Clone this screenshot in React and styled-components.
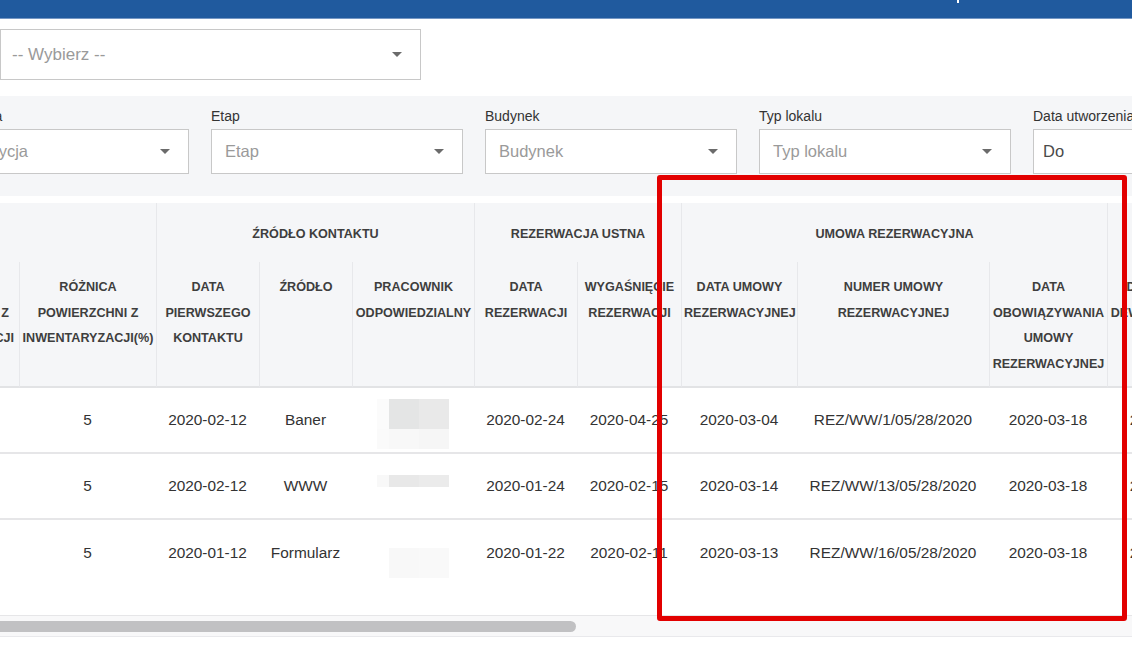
import React from "react";
import styled, { createGlobalStyle } from "styled-components";

const GlobalStyle = createGlobalStyle`
  *, *::before, *::after {
    box-sizing: border-box;
  }
  html,
  body {
    margin: 0;
    padding: 0;
    background: #fff;
  }
  body {
    font-family: "Liberation Sans", Arial, sans-serif;
    color: #333;
    overflow: hidden;
  }
`;

const Page = styled.div`
  position: relative;
  width: 1132px;
  height: 667px;
  overflow: hidden;
`;

const TopBar = styled.header`
  display: flex;
  height: 19px;
  background: #205a9e;
  border-bottom: 1px solid #7597c4;
`;

const BarTick = styled.span`
  margin-left: 957px;
  width: 2px;
  height: 3px;
  background: #fff;
`;

const SelectRow = styled.div`
  padding-top: 10px;
`;

const Select = styled.div`
  display: flex;
  align-items: center;
  justify-content: space-between;
  width: ${(props) => props.$width || "100%"};
  height: ${(props) => props.$height || 45}px;
  padding: 0 ${(props) => props.$pr || 18}px 0 ${(props) => props.$pl || 13}px;
  background: #fff;
  border: 1px solid #c8c8c8;
  font-size: ${(props) => props.$size || 16.5}px;
  color: ${(props) => (props.$dark ? "#4a4a4a" : "#9a9a9a")};
  white-space: nowrap;
`;

const Caret = styled.span`
  flex: none;
  width: 0;
  height: 0;
  border-left: 5px solid transparent;
  border-right: 5px solid transparent;
  border-top: 5px solid #6b6b6b;
`;

const FilterPanel = styled.section`
  margin-top: 16px;
  height: 100px;
  background: #f5f6f8;
  padding: 12px 0 0;
`;

const FilterGrid = styled.div`
  display: grid;
  grid-template-columns: repeat(5, 252px);
  column-gap: 22px;
  margin-left: -63px;
`;

const Field = styled.div`
  display: flex;
  flex-direction: column;
  gap: 4px;
`;

const Label = styled.label`
  font-size: 14px;
  line-height: 17px;
  color: #333;
  white-space: nowrap;
`;

const TableArea = styled.div`
  margin-top: 7px;
  padding-bottom: 30px;
`;

const Table = styled.table`
  table-layout: fixed;
  border-collapse: separate;
  border-spacing: 0;
  margin-left: -103px;
  width: 1454px;
`;

const GroupCell = styled.th`
  height: 59px;
  padding: 3px 2px 0;
  background: #f5f6f8;
  border-left: 1px solid #e7e8eb;
  font-size: 12.6px;
  font-weight: 700;
  color: #3e3e3e;
  text-align: center;
  vertical-align: middle;
  white-space: nowrap;
`;

const HeadCell = styled.th`
  height: 126px;
  padding: 13px 2px 0;
  background: #f5f6f8;
  border-left: 1px solid #e7e8eb;
  border-bottom: 2px solid #e2e3e5;
  font-size: 12.6px;
  line-height: 25.5px;
  font-weight: 700;
  color: #3e3e3e;
  text-align: center;
  vertical-align: top;
  white-space: nowrap;
`;

const Row = styled.tr`
  &:last-child td {
    border-bottom: none;
    height: 65px;
  }
`;

const Cell = styled.td`
  height: 66px;
  padding: 0 2px;
  border-bottom: 2px solid #e6e6e8;
  font-size: 15.4px;
  color: #333;
  text-align: center;
  vertical-align: middle;
  white-space: nowrap;
`;

const Blur = styled.div`
  display: grid;
  grid-template-columns: 12px 30px 30px;
  grid-template-rows: ${(props) => props.$rows};
  width: 72px;
  margin: 0 auto;
  transform: translateY(${(props) => props.$dy}px);
`;

const BlurPixel = styled.span`
  background: ${(props) => props.$c};
`;

const ScrollTrack = styled.div`
  display: flex;
  align-items: center;
  height: 22px;
  background: #f8f8f9;
  border-top: 1px solid #e6e6e8;
  border-bottom: 1px solid #e9e9ec;
`;

const ScrollThumb = styled.div`
  margin-left: -10px;
  width: 586px;
  height: 11px;
  border-radius: 6px;
  background: #c1c1c3;
`;

const Highlight = styled.div`
  position: absolute;
  left: 657px;
  top: 175px;
  width: 470px;
  height: 446px;
  border: 5px solid #e20000;
  border-radius: 3px;
  pointer-events: none;
`;

const filters = [
  { label: "Inwestycja", value: "Inwestycja", caret: true },
  { label: "Etap", value: "Etap", caret: true },
  { label: "Budynek", value: "Budynek", caret: true },
  { label: "Typ lokalu", value: "Typ lokalu", caret: true },
  { label: "Data utworzenia", value: "Do", dark: true },
];

const colWidths = [122, 137, 103, 93, 122, 103, 104, 116, 192, 118, 124, 120];

const groups = [
  { title: "", span: 2 },
  { title: "ŹRÓDŁO KONTAKTU", span: 3 },
  { title: "REZERWACJA USTNA", span: 2 },
  { title: "UMOWA REZERWACYJNA", span: 3 },
  { title: "UMOWA DEWELOPERSKA", span: 2 },
];

const columns = [
  ["RÓŻNICA", "POWIERZCHNI Z", "INWENTARYZACJI"],
  ["RÓŻNICA", "POWIERZCHNI Z", "INWENTARYZACJI(%)"],
  ["DATA", "PIERWSZEGO", "KONTAKTU"],
  ["ŹRÓDŁO"],
  ["PRACOWNIK", "ODPOWIEDZIALNY"],
  ["DATA", "REZERWACJI"],
  ["WYGAŚNIĘCIE", "REZERWACJI"],
  ["DATA UMOWY", "REZERWACYJNEJ"],
  ["NUMER UMOWY", "REZERWACYJNEJ"],
  ["DATA", "OBOWIĄZYWANIA", "UMOWY", "REZERWACYJNEJ"],
  ["DATA UMOWY", "DEWELOPERSKIEJ"],
  ["NUMER UMOWY", "DEWELOPERSKIEJ"],
];

// blurred employee names: rows of pixels
const blurs = [
  {
    rows: "30px 20px",
    dy: 4,
    pixels: ["#fbfbfb", "#e4e5e5", "#e9e9e9", "#fafafa", "#f8f8f8", "#f6f6f6"],
  },
  {
    rows: "12px",
    dy: -5,
    pixels: ["#f8f8f8", "#e8e8e8", "#ebebeb"],
  },
  {
    rows: "30px",
    dy: 10,
    pixels: ["#fff", "#f8f8f8", "#f9f9f9"],
  },
];

const rows = [
  {
    cells: ["3", "5", "2020-02-12", "Baner", null, "2020-02-24", "2020-04-25", "2020-03-04", "REZ/WW/1/05/28/2020", "2020-03-18", "2020-04-10", "DEW/WW/1/2020"],
  },
  {
    cells: ["3", "5", "2020-02-12", "WWW", null, "2020-01-24", "2020-02-15", "2020-03-14", "REZ/WW/13/05/28/2020", "2020-03-18", "2020-04-12", "DEW/WW/13/2020"],
  },
  {
    cells: ["3", "5", "2020-01-12", "Formularz", null, "2020-01-22", "2020-02-11", "2020-03-13", "REZ/WW/16/05/28/2020", "2020-03-18", "2020-04-14", "DEW/WW/16/2020"],
  },
];

const Lines = ({ lines }) =>
  lines.map((line, i) => (
    <React.Fragment key={i}>
      {i > 0 && <br />}
      {line}
    </React.Fragment>
  ));

export const App = () => {
  return (
    <Page>
      <GlobalStyle />
      <TopBar>
        <BarTick />
      </TopBar>

      <SelectRow>
        <Select $width="421px" $height={51} $pl={11} $pr={18} $size={17}>
          -- Wybierz --
          <Caret />
        </Select>
      </SelectRow>

      <FilterPanel>
        <FilterGrid>
          {filters.map((f) => (
            <Field key={f.label}>
              <Label>{f.label}</Label>
              <Select $dark={f.dark} $pl={f.dark ? 9 : 13}>
                {f.value}
                {f.caret && <Caret />}
              </Select>
            </Field>
          ))}
        </FilterGrid>
      </FilterPanel>

      <TableArea>
        <Table>
          <colgroup>
            {colWidths.map((w, i) => (
              <col key={i} style={{ width: w }} />
            ))}
          </colgroup>
          <thead>
            <tr>
              {groups.map((g, i) => (
                <GroupCell key={i} colSpan={g.span}>
                  {g.title}
                </GroupCell>
              ))}
            </tr>
            <tr>
              {columns.map((c, i) => (
                <HeadCell key={i}>
                  <Lines lines={c} />
                </HeadCell>
              ))}
            </tr>
          </thead>
          <tbody>
            {rows.map((r, ri) => (
              <Row key={ri}>
                {r.cells.map((v, ci) => (
                  <Cell key={ci}>
                    {v === null ? (
                      <Blur $rows={blurs[ri].rows} $dy={blurs[ri].dy}>
                        {blurs[ri].pixels.map((c, pi) => (
                          <BlurPixel key={pi} $c={c} />
                        ))}
                      </Blur>
                    ) : (
                      v
                    )}
                  </Cell>
                ))}
              </Row>
            ))}
          </tbody>
        </Table>
      </TableArea>

      <ScrollTrack>
        <ScrollThumb />
      </ScrollTrack>

      <Highlight />
    </Page>
  );
};

export default App;
